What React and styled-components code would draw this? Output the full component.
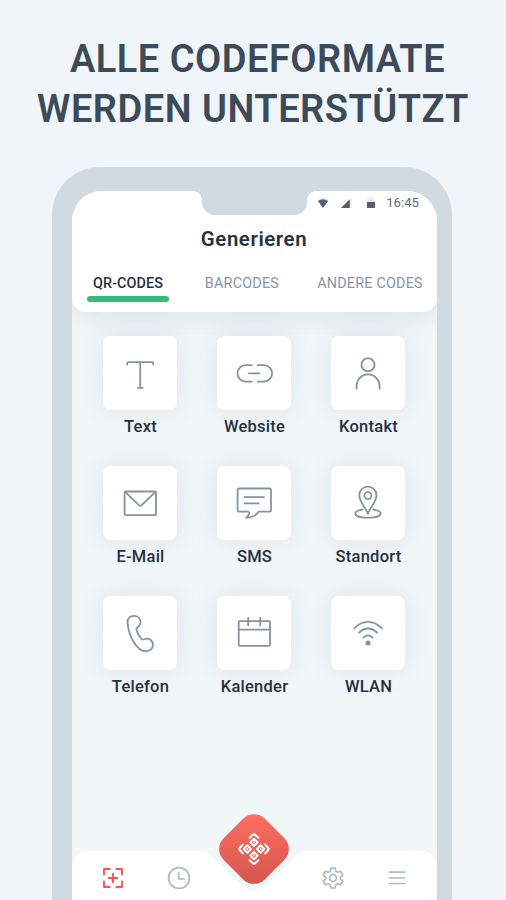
import React from 'react';
import styled, { createGlobalStyle } from 'styled-components';

const GlobalStyle = createGlobalStyle`
  * {
    box-sizing: border-box;
  }

  body {
    margin: 0;
    background: #eff5f8;
    font-family: Roboto, 'Liberation Sans', sans-serif;
  }
`;

const Page = styled.div`
  width: 506px;
  height: 900px;
  overflow: hidden;
  display: flex;
  flex-direction: column;
  background: #eff5f8;
`;

const Headline = styled.h1`
  margin: 0;
  height: 167px;
  padding-top: 34px;
  color: #3c4a59;
  font-size: 38px;
  font-weight: 600;
  line-height: 50px;
  text-align: center;
`;

const HeadlineRow = styled.span`
  display: block;
  letter-spacing: 0.5px;
  padding-left: ${({ $shift }) => $shift};
  white-space: nowrap;
`;

const Phone = styled.div`
  flex: 1;
  width: 400px;
  margin-left: 52px;
  padding: 23.5px 15px 0 20px;
  display: flex;
  border-radius: 48px 48px 0 0;
  background: #d1d9e1;
`;

const Screen = styled.div`
  flex: 1;
  position: relative;
  display: flex;
  flex-direction: column;
  border-radius: 30px 30px 0 0;
  overflow: hidden;
  background: #f1f6f9;
`;

const Notch = styled.div`
  position: absolute;
  top: 0;
  left: 129.5px;
  width: 105.5px;
  height: 24px;
  border-radius: 0 0 13px 13px;
  background: #d1d9e1;

  &::before,
  &::after {
    content: '';
    position: absolute;
    top: 0;
    width: 9px;
    height: 9px;
  }

  &::before {
    right: 100%;
    background: radial-gradient(circle at 0 100%, transparent 8.6px, #d1d9e1 9.2px);
  }

  &::after {
    left: 100%;
    background: radial-gradient(circle at 100% 100%, transparent 8.6px, #d1d9e1 9.2px);
  }
`;

const Header = styled.header`
  height: 121.5px;
  display: flex;
  flex-direction: column;
  border-radius: 0 0 14px 14px;
  background: #fff;
  box-shadow: 0 4px 26px rgba(60, 80, 90, 0.12);
`;

const StatusBar = styled.div`
  height: 25px;
  padding-right: 18px;
  display: flex;
  align-items: center;
  justify-content: flex-end;
`;

const StatusIcons = styled.svg`
  width: 62px;
  height: 14px;
  margin-right: 7px;
`;

const Clock = styled.span`
  color: #5f6b79;
  font-size: 13.2px;
  line-height: 16px;
`;

const Title = styled.h2`
  margin: 0;
  padding: 11px 1px 0 0;
  color: #233142;
  font-size: 20.4px;
  font-weight: 600;
  line-height: 25px;
  letter-spacing: 0.6px;
  text-align: center;
`;

const Tabs = styled.nav`
  display: flex;
  margin-top: 22px;
  padding-left: 15px;
`;

const Tab = styled.a`
  flex: none;
  width: ${({ $width }) => $width};
  color: ${({ $active }) => ($active ? '#233142' : '#8995a6')};
  font-size: 14.4px;
  font-weight: ${({ $active }) => ($active ? 500 : 400)};
  line-height: 20px;
  letter-spacing: ${({ $active }) => ($active ? '0.05px' : '0.2px')};
  text-align: center;
  white-space: nowrap;

  &::after {
    content: '';
    display: block;
    height: 6px;
    margin-top: 2px;
    border-radius: 3px;
    background: ${({ $active }) => ($active ? '#37b877' : 'transparent')};
  }
`;

const Grid = styled.main`
  flex: 1;
  display: grid;
  grid-template-columns: repeat(3, 114px);
  grid-auto-rows: 130px;
  align-content: start;
  padding: 24.4px 0 0 11px;
`;

const Item = styled.div`
  display: flex;
  flex-direction: column;
  align-items: center;
`;

const Tile = styled.div`
  width: 73.5px;
  height: 73.5px;
  border-radius: 7.5px;
  background: #fff;
  box-shadow: 0 0 26px rgba(60, 80, 90, 0.11);
`;

const LineIcon = styled.svg`
  display: block;
  width: 73.5px;
  height: 73.5px;
  fill: none;
  stroke: #8492a6;
  stroke-width: 1.8;
  stroke-linecap: round;
  stroke-linejoin: round;
`;

const Label = styled.span`
  margin-top: 7px;
  padding-left: 1px;
  color: #233142;
  font-size: 16.5px;
  font-weight: 500;
  line-height: 20px;
  letter-spacing: 0.25px;
`;

const BottomBar = styled.footer`
  position: relative;
  height: 49px;
  display: flex;
  align-items: center;
  padding: 4px 0 0 28.6px;

  &::before {
    content: '';
    position: absolute;
    inset: 0;
    background: #fff;
    clip-path: path(
      'M0 15 A15 15 0 0 1 15 0 H129 Q134.7 0 139 4.3 L167.9 33.1 A20 20 0 0 0 196.1 33.1 L225 4.3 Q229.3 0 235 0 H350 A15 15 0 0 1 365 15 V49 H0 Z'
    );
  }
`;

const NavIcon = styled.svg`
  position: relative;
  flex: none;
  width: 24px;
  height: 24px;
  margin-right: ${({ $gap }) => $gap || 0};
  fill: none;
  stroke: ${({ $active }) => ($active ? '#f5564c' : '#b0bac3')};
  stroke-width: ${({ $active }) => ($active ? 1.9 : 1.7)};
  stroke-linecap: round;
  stroke-linejoin: round;
`;

const ScanButton = styled.svg`
  position: absolute;
  left: 147px;
  bottom: 16px;
  width: 70px;
  height: 70px;
`;

const items = [
  {
    label: 'Text',
    icon: <path d="M23.8 27.8V26.6Q23.8 25.4 25 25.4H48.6Q49.8 25.4 49.8 26.6V27.8M36.8 25.4V51.2M34.5 51.2H39.3" />,
  },
  {
    label: 'Website',
    icon: <path d="M34.3 28.5H28.3A8.2 8.2 0 0 0 28.3 44.9H34.3M40.3 28.5H46.5A8.2 8.2 0 0 1 46.5 44.9H40.3M31.5 36.7H42" />,
  },
  {
    label: 'Kontakt',
    icon: (
      <>
        <circle cx="36.6" cy="28" r="6.5" />
        <path d="M25.2 52V49.2A11.5 11.5 0 0 1 48.2 49.2V52" />
      </>
    ),
  },
  {
    label: 'E-Mail',
    icon: (
      <>
        <rect x="21.2" y="24.8" width="31.4" height="23.6" rx="1" />
        <path d="M22 25.4L35.8 38.7Q36.9 39.7 38 38.7L51.8 25.4" />
      </>
    ),
  },
  {
    label: 'SMS',
    icon: (
      <path d="M31 45H22Q20.2 45 20.2 43.2V23.6Q20.2 21.8 22 21.8H51.8Q53.6 21.8 53.6 23.6V43.2Q53.6 45 51.8 45H41.2Q37.5 51 28.8 51Q33.5 46.5 31 45M27.2 30.5H46.5M27.2 36.7H41.3" />
    ),
  },
  {
    label: 'Standort',
    icon: (
      <>
        <path d="M36.5 47.2C34.2 40.5 27.9 35 27.9 28.5A8.6 8.6 0 0 1 45.1 28.5C45.1 35 38.8 40.5 36.5 47.2Z" />
        <circle cx="36.5" cy="29" r="3.5" />
        <path d="M31.2 42.9C26.8 43.5 23.9 44.8 23.9 46.8C23.9 49.4 29.4 51.1 36.5 51.1S49.2 49.4 49.2 46.8C49.2 44.8 46.2 43.5 41.8 42.9" />
      </>
    ),
  },
  {
    label: 'Telefon',
    icon: (
      <path d="M24.2 26C23.9 21.7 26.7 19.2 30.5 19.2C34.5 19.2 37.1 21.8 37.1 25.1C37.1 27.6 36.2 29.1 34.8 30.1C33.2 31.2 32.5 31.5 33 33C34.2 37 36.1 40.2 38.4 42.4C39.5 43.4 40.2 42.7 41.2 42.3C45.5 40.9 49.5 44 49.5 48.2C49.5 52.2 46.2 54.7 42.1 54.5C33.2 54.1 25 39 24.2 26Z" />
    ),
  },
  {
    label: 'Kalender',
    icon: (
      <>
        <rect x="21.3" y="24.4" width="31.3" height="24.7" rx="1" />
        <path d="M21.3 33H52.6M30.8 21.2V28.6M42.8 21.2V28.6" />
      </>
    ),
  },
  {
    label: 'WLAN',
    icon: (
      <>
        <path d="M22.8 31.8Q29 25.2 36.6 25.2T50.5 31.8M27.6 36Q31.8 31.8 36.6 31.8T45.7 36M31.9 40.9Q34 38.6 36.6 38.6T41.4 40.9" />
        <circle cx="36.6" cy="46.3" r="1.6" fill="#8492a6" />
      </>
    ),
  },
];

const arms = [0, 90, 180, 270];

const App = () => {
  return (
    <>
      <GlobalStyle />
      <Page>
        <Headline>
          <HeadlineRow $shift="9px">ALLE CODEFORMATE</HeadlineRow>
          <HeadlineRow $shift="0">WERDEN UNTERSTÜTZT</HeadlineRow>
        </Headline>
        <Phone>
          <Screen>
            <Header>
              <StatusBar>
                <StatusIcons viewBox="0 0 62 14">
                  <path d="M0 4Q6 -.8 12 4L6 11.8Z" fill="#eceff1" />
                  <path d="M.9 5Q6 1.5 11.1 5L6 12Z" fill="#56616e" />
                  <path d="M24 12H35V1Z" fill="#eceff1" />
                  <path d="M24 12H32.8V3.2Z" fill="#56616e" />
                  <path d="M50 12V3Q50 2 51 2H52V1H56V2H57Q58 2 58 3V12Z" fill="#eceff1" />
                  <path d="M50 6H58V11.5Q58 12 57.5 12H50.5Q50 12 50 11.5Z" fill="#56616e" />
                </StatusIcons>
                <Clock>16:45</Clock>
              </StatusBar>
              <Title>Generieren</Title>
              <Tabs>
                <Tab $active $width="82px">QR-CODES</Tab>
                <Tab $width="146px">BARCODES</Tab>
                <Tab $width="110px">ANDERE CODES</Tab>
              </Tabs>
            </Header>
            <Notch />
            <Grid>
              {items.map(({ label, icon }) => (
                <Item key={label}>
                  <Tile>
                    <LineIcon viewBox="-0.4 -0.7 73.5 73.5">{icon}</LineIcon>
                  </Tile>
                  <Label>{label}</Label>
                </Item>
              ))}
            </Grid>
            <BottomBar>
              <NavIcon $active $gap="42px" viewBox="0 0 24 24">
                <path d="M3 8.5V3H8.7M15.3 3H21V8.5M21 15.5V21H15.3M8.7 21H3V15.5M12 7.7V16.3M7.7 12H16.3" />
              </NavIcon>
              <NavIcon $gap="130.5px" viewBox="0 0 24 24">
                <circle cx="12" cy="12" r="10.4" />
                <path d="M11.7 6.3V13H17" />
              </NavIcon>
              <NavIcon $gap="40px" viewBox="0 0 24 24">
                <path d="M9.9 2H14.1L14.7 5L16.7 6.2L19.6 5.2L21.8 8.9L19.5 10.9V13.1L21.8 15.1L19.6 18.8L16.7 17.8L14.7 19L14.1 22H9.9L9.3 19L7.3 17.8L4.4 18.8L2.2 15.1L4.5 13.1V10.9L2.2 8.9L4.4 5.2L7.3 6.2L9.3 5Z" />
                <circle cx="12" cy="12" r="3.4" />
              </NavIcon>
              <NavIcon viewBox="0 0 24 24">
                <path d="M4.4 6.2H19.6M4.4 12H19.6M4.4 17.5H19.6" />
              </NavIcon>
              <ScanButton viewBox="-35 -35 70 70">
                <defs>
                  <linearGradient id="scan" x1="0" y1="0" x2="1" y2="1">
                    <stop offset="0.1" stopColor="#fd6d62" />
                    <stop offset="0.9" stopColor="#d4564d" />
                  </linearGradient>
                </defs>
                <rect x="-29.1" y="-29.1" width="58.2" height="58.2" rx="15.2" fill="url(#scan)" transform="rotate(45)" />
                <g fill="none" stroke="#fff" strokeWidth="2" strokeLinecap="round" strokeLinejoin="round">
                  {arms.map((angle) => (
                    <g key={angle} transform={`rotate(${angle})`}>
                      <path d="M0 -10.3L3.7 -6.6L0 -2.9L-3.7 -6.6Z" />
                      <circle cx="0" cy="-6.6" r="1" fill="#fff" stroke="none" />
                      <path d="M-4.4 -11.2L-.8 -14.5Q0 -15.2 .8 -14.5L4.4 -11.2" />
                    </g>
                  ))}
                </g>
              </ScanButton>
            </BottomBar>
          </Screen>
        </Phone>
      </Page>
    </>
  );
};

export default App;
